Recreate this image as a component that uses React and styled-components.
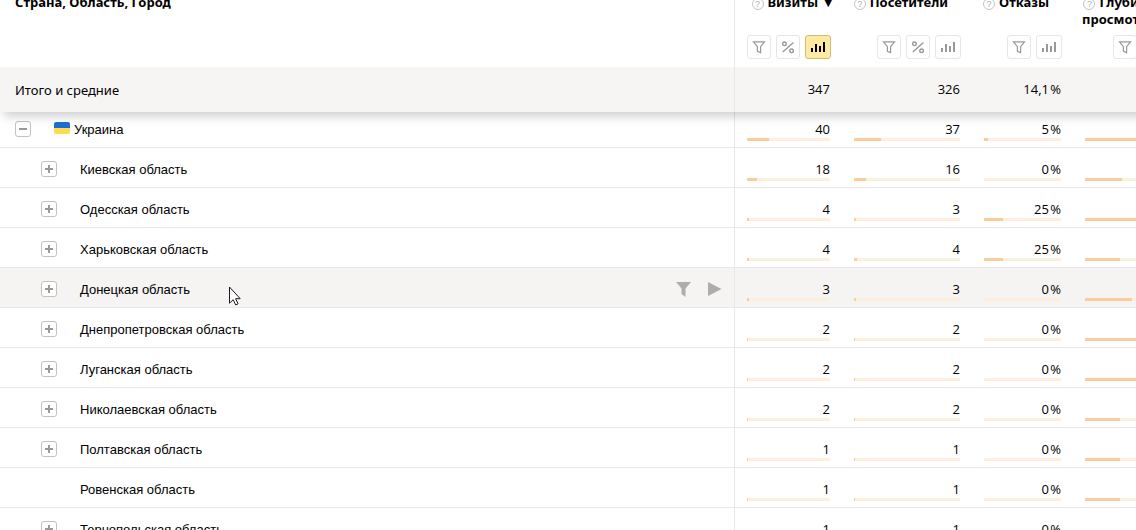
import styled, { createGlobalStyle } from 'styled-components';

const GlobalStyle = createGlobalStyle`
  * {
    box-sizing: border-box;
  }

  body {
    margin: 0;
    overflow: hidden;
    background: #fff;
    color: #000;
    font-family: 'Liberation Sans', Arial, sans-serif;
    font-size: 13px;
  }
`;

const Report = styled.div`
  height: 100vh;
  overflow: hidden;
`;

const Table = styled.table`
  width: calc(100% + 43px);
  margin-top: -6px;
  table-layout: fixed;
  border-collapse: separate;
  border-spacing: 0;
`;

const Col = styled.col`
  width: ${({ $width }) => $width};
`;

const HeadCell = styled.th`
  height: 73px;
  padding: 0 12px 8px;
  vertical-align: top;
  font: bold 13px/17px 'Noto Sans', sans-serif;
  text-align: right;
`;

const DimensionHead = styled(HeadCell)`
  padding-left: 15px;
  border-right: 1px solid #e8e8e8;
  text-align: left;
`;

const HeadContent = styled.div`
  display: flex;
  flex-direction: column;
  justify-content: space-between;
  height: 65px;
`;

const HeadTitle = styled.div`
  display: flex;
  justify-content: flex-end;
  white-space: nowrap;
`;

const SortMark = styled.span`
  flex: none;
  width: 12px;
  padding-left: 6px;
  font: 11px/17px 'DejaVu Sans', sans-serif;
`;

const Help = styled.button`
  width: 12px;
  height: 12px;
  margin: 0 4px 0 0;
  padding: 0;
  border: 1px solid #c4c4c4;
  border-radius: 50%;
  background: none;
  color: #b0b0b0;
  font: 9px/10px 'Liberation Sans', sans-serif;
`;

const Tools = styled.div`
  display: flex;
  justify-content: flex-end;
  gap: 5px;
  margin-right: -1px;
`;

const ToolButton = styled.button`
  display: flex;
  flex: none;
  align-items: center;
  justify-content: center;
  width: ${({ $wide }) => ($wide ? '26px' : '24px')};
  height: 24px;
  padding: 0;
  border: 1px solid ${({ $active }) => ($active ? '#cdbd7c' : '#e6e6e6')};
  border-radius: 3px;
  background: ${({ $active }) => ($active ? '#ffeba0' : '#fff')};
  color: ${({ $active }) => ($active ? '#000' : '#999')};
`;

const TotalRow = styled.tr`
  position: relative;
  box-shadow: 0 8px 10px -4px rgba(0, 0, 0, 0.2);
`;

const TotalCell = styled.td`
  height: 45px;
  padding: 0 12px 2px;
  background: #f6f5f3;
  font: 13px/18px 'Open Sans', sans-serif;
  text-align: right;
`;

const TotalName = styled(TotalCell)`
  padding: 0 12px 0 15px;
  border-right: 1px solid #e8e8e8;
  font-family: 'Noto Sans', sans-serif;
  text-align: left;
`;

const Row = styled.tr`
  background: ${({ $hovered }) => ($hovered ? '#f5f4f3' : 'transparent')};

  td {
    padding-top: ${({ $first }) => ($first ? '8px' : '12px')};
  }
`;

const NameCell = styled.td`
  padding: 0 12px 0 ${({ $nested }) => ($nested ? '41px' : '15px')};
  border-right: 1px solid #e8e8e8;
  border-bottom: 1px solid #e8e8e8;
  vertical-align: top;
  line-height: 18px;
`;

const NameLine = styled.div`
  display: flex;
  align-items: center;
  gap: 23px;
  height: 18px;
`;

const Name = styled.span`
  position: relative;
  display: flex;
  align-items: center;
  gap: 4px;
  padding-top: 2px;
  white-space: nowrap;
`;

const Toggle = styled.button`
  display: flex;
  flex: none;
  width: 16px;
  height: 16px;
  padding: 0;
  border: 1px solid #c2c2c2;
  border-radius: 3px;
  background: #fff;
  color: #999;
`;

const ToggleSpace = styled.span`
  flex: none;
  width: 16px;
`;

const RowActions = styled.div`
  display: flex;
  gap: 16px;
  margin-left: auto;
`;

const RowAction = styled.button`
  display: flex;
  padding: 0;
  border: 0;
  background: none;
  color: #adadad;
`;

const Flag = styled.span`
  width: 16px;
  height: 12px;
  margin-bottom: 4px;
  border-radius: 2px;
  background: linear-gradient(#1c6dd0 50%, #ffdb4d 50%);
`;

const Pointer = styled.svg`
  position: absolute;
  top: 7px;
  left: calc(100% + 38px);
`;

const ValueCell = styled.td`
  padding: 0 12px 6px;
  border-bottom: 1px solid #e8e8e8;
  vertical-align: top;
`;

const Value = styled.div`
  height: 18px;
  font: 13px/18px 'Open Sans', sans-serif;
  text-align: right;
`;

const Track = styled.div`
  height: 3px;
  background: #feeedd;
`;

const Fill = styled.div`
  height: 3px;
  background: #f9cc9c;
`;

const FilterIcon = () => (
  <svg width="14" height="14" viewBox="0 0 14 14" fill="none" stroke="currentColor" strokeWidth="1.2">
    <path d="M1.5 1.8h11L8.6 6.6v6L5.4 11.4V6.6z" />
  </svg>
);

const PercentIcon = () => (
  <svg width="14" height="14" viewBox="0 0 14 14" fill="none" stroke="currentColor" strokeWidth="1.4">
    <circle cx="3.4" cy="3.8" r="1.8" />
    <circle cx="10.6" cy="10.8" r="1.8" />
    <path d="M12.4 2.4L1.8 12" />
  </svg>
);

const ChartIcon = () => (
  <svg width="14" height="12" viewBox="0 0 14 12" fill="currentColor">
    <path d="M0 7h2v4H0zM4 3h2v8H4zM8 5h2v6H8zM12 1h2v10h-2z" />
  </svg>
);

const tools = {
  filter: { icon: FilterIcon, label: 'Фильтр' },
  percent: { icon: PercentIcon, label: 'Проценты' },
  chart: { icon: ChartIcon, label: 'График' },
};

const columns = [
  { title: 'Визиты', tools: ['filter', 'percent', 'chart'], active: 'chart', sorted: true },
  { title: 'Посетители', tools: ['filter', 'percent', 'chart'] },
  { title: 'Отказы', tools: ['filter', 'chart'] },
  { title: 'Глубина', second: 'просмотра', tools: ['filter', 'chart'] },
];

const rows = [
  { name: 'Украина', visits: 40, users: 37, bounce: 5, depth: 100, open: true },
  { name: 'Киевская область', visits: 18, users: 16, bounce: 0, depth: 45 },
  { name: 'Одесская область', visits: 4, users: 3, bounce: 25, depth: 100 },
  { name: 'Харьковская область', visits: 4, users: 4, bounce: 25, depth: 43 },
  { name: 'Донецкая область', visits: 3, users: 3, bounce: 0, depth: 57, hovered: true },
  { name: 'Днепропетровская область', visits: 2, users: 2, bounce: 0, depth: 100 },
  { name: 'Луганская область', visits: 2, users: 2, bounce: 0, depth: 100 },
  { name: 'Николаевская область', visits: 2, users: 2, bounce: 0, depth: 43 },
  { name: 'Полтавская область', visits: 1, users: 1, bounce: 0, depth: 43 },
  { name: 'Ровенская область', visits: 1, users: 1, bounce: 0, depth: 43, leaf: true },
  { name: 'Тернопольская область', visits: 1, users: 1, bounce: 0, depth: 43 },
];

const MetricHead = ({ column }) => (
  <HeadCell scope="col">
    <HeadContent>
      <HeadTitle>
        <div>
          <Help type="button">?</Help>
          {column.title}
          {column.second && <div>{column.second}</div>}
        </div>
        <SortMark>{column.sorted && '▼'}</SortMark>
      </HeadTitle>
      <Tools>
        {column.tools.map((key) => {
          const { icon: Icon, label } = tools[key];
          return (
            <ToolButton
              key={key}
              type="button"
              aria-label={label}
              $wide={key === 'chart'}
              $active={key === column.active}
            >
              <Icon />
            </ToolButton>
          );
        })}
      </Tools>
    </HeadContent>
  </HeadCell>
);

const Metric = ({ value, percent }) => (
  <ValueCell>
    <Value>{value}</Value>
    <Track>
      <Fill style={{ width: `${percent}%` }} />
    </Track>
  </ValueCell>
);

const RegionRow = ({ row }) => (
  <Row $first={row.open} $hovered={row.hovered}>
    <NameCell $nested={!row.open}>
      <NameLine>
        {row.leaf ? (
          <ToggleSpace />
        ) : (
          <Toggle type="button" aria-label={row.open ? 'Свернуть' : 'Развернуть'}>
            <svg width="14" height="14" viewBox="0 0 14 14" fill="currentColor">
              <path d={row.open ? 'M3 6h8v2H3z' : 'M3 6h3V3h2v3h3v2H8v3H6V8H3z'} />
            </svg>
          </Toggle>
        )}
        <Name>
          {row.open && <Flag />}
          {row.name}
          {row.hovered && (
            <Pointer width="13" height="20" viewBox="0 0 13 20" fill="#fff" stroke="#1c1826">
              <path d="M1.5 1v16.2l3.7-3.5 2.5 5.2 2.4-1.1-2.5-5.1h4.6z" />
            </Pointer>
          )}
        </Name>
        {row.hovered && (
          <RowActions>
            <RowAction type="button" aria-label="Фильтр">
              <svg width="16" height="16" viewBox="0 0 16 16" fill="currentColor">
                <path d="M0 1h15L9.5 7.5v8.5L5.5 13V7.5z" />
              </svg>
            </RowAction>
            <RowAction type="button" aria-label="Вебвизор">
              <svg width="14" height="16" viewBox="0 0 14 16" fill="currentColor">
                <path d="M0 1l13.5 7L0 15z" />
              </svg>
            </RowAction>
          </RowActions>
        )}
      </NameLine>
    </NameCell>
    <Metric value={row.visits} percent={(row.visits / 151) * 100} />
    <Metric value={row.users} percent={(row.users / 145) * 100} />
    <Metric value={`${row.bounce}\u200a%`} percent={row.bounce} />
    <Metric percent={row.depth} />
  </Row>
);

const App = () => {
  return (
    <>
      <GlobalStyle />
      <Report>
        <Table>
          <colgroup>
            <Col $width="auto" />
            <Col $width="107px" />
            <Col $width="130px" />
            <Col $width="101px" />
            <Col $width="106px" />
          </colgroup>
          <thead>
            <tr>
              <DimensionHead scope="col">Страна, Область, Город</DimensionHead>
              {columns.map((column) => (
                <MetricHead key={column.title} column={column} />
              ))}
            </tr>
            <TotalRow>
              <TotalName>Итого и средние</TotalName>
              <TotalCell>347</TotalCell>
              <TotalCell>326</TotalCell>
              <TotalCell>14,1{'\u200a'}%</TotalCell>
              <TotalCell />
            </TotalRow>
          </thead>
          <tbody>
            {rows.map((row) => (
              <RegionRow key={row.name} row={row} />
            ))}
          </tbody>
        </Table>
      </Report>
    </>
  );
};

export default App;
